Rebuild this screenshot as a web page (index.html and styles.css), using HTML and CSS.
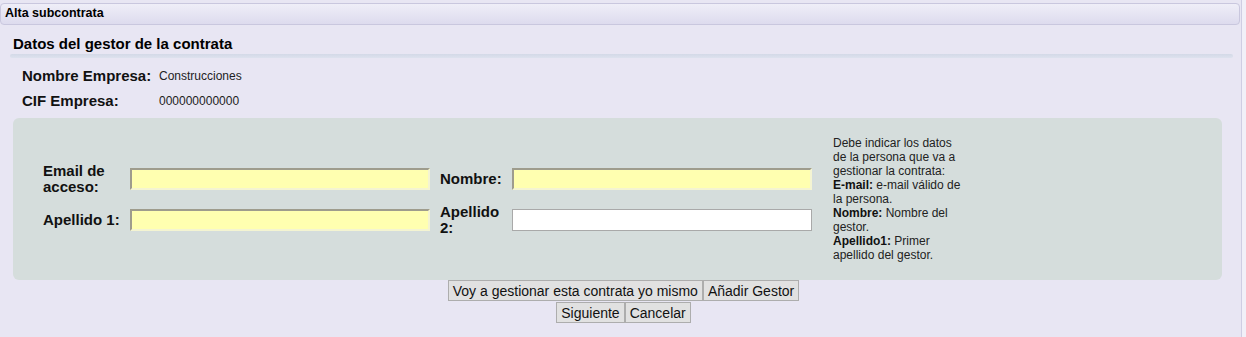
FILE: index.html
```html
<!DOCTYPE html>
<html lang="es">
<head>
  <meta charset="UTF-8">
  <title>Alta subcontrata</title>
  <link rel="stylesheet" href="styles.css">
</head>
<body>
  <div class="panel">
    <div class="titlebar">Alta subcontrata</div>

    <h2 class="section-title">Datos del gestor de la contrata</h2>
    <div class="section-bar"></div>

    <div class="info">
      <div class="info-row">
        <span class="info-label">Nombre Empresa:</span>
        <span class="info-value">Construcciones</span>
      </div>
      <div class="info-row">
        <span class="info-label">CIF Empresa:</span>
        <span class="info-value">000000000000</span>
      </div>
    </div>

    <form class="gestor-box">
      <div class="form-grid">
        <label for="email">Email de acceso:</label>
        <input type="text" id="email" class="required">
        <label for="nombre">Nombre:</label>
        <input type="text" id="nombre" class="required">

        <label for="apellido1">Apellido 1:</label>
        <input type="text" id="apellido1" class="required">
        <label for="apellido2">Apellido 2:</label>
        <input type="text" id="apellido2">
      </div>
      <div class="help">
        Debe indicar los datos de la persona que va a gestionar la contrata:<br>
        <b>E-mail:</b> e-mail válido de la persona.<br>
        <b>Nombre:</b> Nombre del gestor.<br>
        <b>Apellido1:</b> Primer apellido del gestor.
      </div>
    </form>

    <div class="actions">
      <div class="btn-row">
        <button type="button">Voy a gestionar esta contrata yo mismo</button><button type="button">Añadir Gestor</button>
      </div>
      <div class="btn-row">
        <button type="button">Siguiente</button><button type="button">Cancelar</button>
      </div>
    </div>
  </div>
</body>
</html>
```

FILE: styles.css
```css
/* Reset */
* {
  margin: 0;
  padding: 0;
  box-sizing: border-box;
}

body {
  font-family: 'Liberation Sans', Arial, sans-serif;
  background-color: #f1f0f8;
  color: #111;
}

/* Panel */
.panel {
  width: 1242px;
  min-height: 337px;
  background-color: #e8e6f3;
  border-right: 1px solid #cfcde3;
  padding-top: 3px;
}

.titlebar {
  width: 1240px;
  height: 22px;
  padding-left: 4px;
  border: 1px solid #c9c7de;
  border-radius: 4px;
  background: linear-gradient(#efeef8, #dddbee);
  font-size: 12.5px;
  font-weight: bold;
  line-height: 19px;
  color: #000;
}

/* Section header */
.section-title {
  margin: 10px 0 0 13px;
  font-size: 15px;
  line-height: 17px;
  color: #000;
}

.section-bar {
  height: 4px;
  margin: 2px 8px 0 10px;
  border-radius: 2px;
  background: linear-gradient(#d3d9e7, #dde2ee);
}

/* Company info */
.info {
  margin: 5px 0 0 22px;
}

.info-row {
  display: flex;
  align-items: center;
  height: 25px;
}

.info-label {
  width: 137px;
  font-size: 15px;
  font-weight: bold;
}

.info-value {
  font-size: 12px;
  color: #222;
}

/* Manager form */
.gestor-box {
  display: flex;
  align-items: center;
  width: 1209px;
  margin: 5px 0 0 13px;
  padding: 18px 30px;
  border-radius: 6px;
  background-color: #d5dddc;
}

.form-grid {
  display: grid;
  grid-template-columns: 77px 300px 62px 300px;
  column-gap: 10px;
  row-gap: 9px;
  align-items: center;
}

.form-grid label {
  font-size: 15px;
  font-weight: bold;
  line-height: 16px;
  min-height: 32px;
  display: flex;
  align-items: center;
}

.form-grid input {
  height: 22px;
  border: 1px solid #a9a9a9;
  background-color: #fff;
  font-family: inherit;
  font-size: 13px;
}

.form-grid input.required {
  background-color: #ffffb0;
  border-width: 2px;
  border-color: #9e9c8d #f4f4d2 #f4f4d2 #9e9c8d;
}

.help {
  width: 132px;
  margin-left: 21px;
  font-size: 12px;
  line-height: 14px;
  color: #222;
}

.help b {
  color: #111;
}

/* Buttons */
.actions {
  padding: 0 0 0 6px;
  display: flex;
  flex-direction: column;
  align-items: center;
  gap: 1px;
}

.btn-row {
  display: flex;
}

.btn-row button {
  height: 21px;
  padding: 0 4px;
  font-family: inherit;
  font-size: 14px;
  color: #111;
  background-color: #e1e1e1;
  border: 1px solid #adadad;
}
```
